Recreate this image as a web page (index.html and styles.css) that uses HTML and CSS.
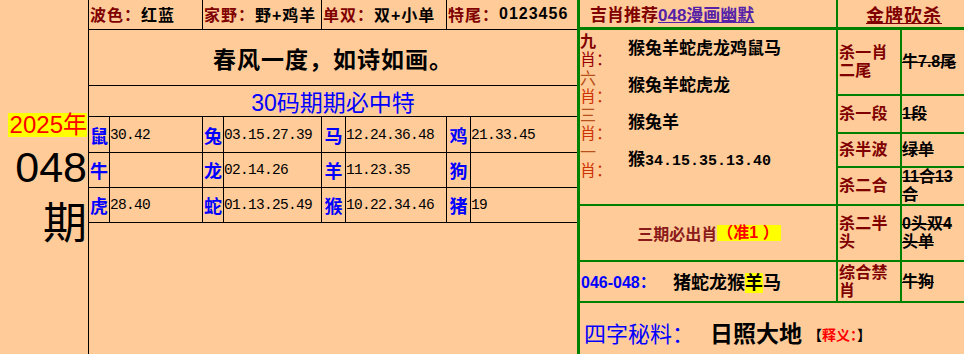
FILE: index.html
```html
<!DOCTYPE html>
<html lang="zh-CN">
<head>
<meta charset="utf-8">
<title>048期</title>
<link rel="stylesheet" href="styles.css">
</head>
<body>
<div class="page">
  <div class="issue">
    <div class="year">2025年</div>
    <div class="num">048</div>
    <div class="qi">期</div>
  </div>

  <div class="mid">
    <div class="hd"><span class="lbl">波色：</span>红蓝</div>
    <div class="hd"><span class="lbl">家野：</span>野+鸡羊</div>
    <div class="hd"><span class="lbl">单双：</span>双+小单</div>
    <div class="hd last"><span class="lbl">特尾：</span>0123456</div>
    <div class="poem">春风一度，如诗如画。</div>
    <div class="title">30码期期必中特</div>

    <div class="zx">鼠</div><div class="nums">30.42</div>
    <div class="zx">兔</div><div class="nums">03.15.27.39</div>
    <div class="zx">马</div><div class="nums">12.24.36.48</div>
    <div class="zx">鸡</div><div class="nums last">21.33.45</div>

    <div class="zx">牛</div><div class="nums"></div>
    <div class="zx">龙</div><div class="nums">02.14.26</div>
    <div class="zx">羊</div><div class="nums">11.23.35</div>
    <div class="zx">狗</div><div class="nums last"></div>

    <div class="zx">虎</div><div class="nums">28.40</div>
    <div class="zx">蛇</div><div class="nums">01.13.25.49</div>
    <div class="zx">猴</div><div class="nums">10.22.34.46</div>
    <div class="zx">猪</div><div class="nums last">19</div>
  </div>

  <div class="right">
    <div class="rhead">
      <div class="rh1">吉肖推荐<span class="link">048漫画幽默</span></div>
      <div class="rh2"><span class="gold">金牌砍杀</span></div>
    </div>
    <div class="rgrid">
      <div class="rec">
        <div class="rrow"><div class="rl"><div class="rl1 dk">九</div><div class="rl2 dk2">肖：</div></div><div class="rt">猴兔羊蛇虎龙鸡鼠马</div></div>
        <div class="rrow"><div class="rl"><div class="rl1 or">六</div><div class="rl2 or2">肖：</div></div><div class="rt">猴兔羊蛇虎龙</div></div>
        <div class="rrow"><div class="rl"><div class="rl1 or">三</div><div class="rl2 or2">肖：</div></div><div class="rt">猴兔羊</div></div>
        <div class="rrow"><div class="rl"><div class="rl1 or">一</div><div class="rl2 or2">肖：</div></div><div class="rt">猴<span class="bn">34.15.35.13.40</span></div></div>
      </div>
      <div class="kl">杀一肖二尾</div><div class="kv">牛7.8尾</div>
      <div class="kl">杀一段</div><div class="kv">1段</div>
      <div class="kl">杀半波</div><div class="kv">绿单</div>
      <div class="kl">杀二合</div><div class="kv">11合13合</div>

      <div class="must">三期必出肖<span class="hl">（准1&nbsp;）</span></div>
      <div class="kl">杀二半头</div><div class="kv">0头双4头单</div>

      <div class="recent"><span class="rng">046-048：</span><span class="zs">猪蛇龙猴<span class="ylw">羊</span>马</span></div>
      <div class="kl">综合禁肖</div><div class="kv">牛狗</div>

      <div class="secret"><span class="sl">四字秘料：</span><span class="sv">日照大地</span><span class="sx">【<span class="red">释义：</span>】</span></div>
    </div>
  </div>
</div>
</body>
</html>
```

FILE: styles.css
```css
html, body {
  margin: 0;
  padding: 0;
}
body {
  width: 964px;
  height: 354px;
  overflow: hidden;
  background: #ffcc99;
  font-family: "Liberation Sans", "Noto Sans CJK SC", sans-serif;
  color: #000;
}
.page {
  display: flex;
  height: 354px;
}

/* left issue column */
.issue {
  width: 89px;
  box-sizing: border-box;
  border-right: 1px solid #000;
  display: flex;
  flex-direction: column;
  justify-content: center;
  align-items: flex-end;
  padding-right: 1px;
}
.year {
  display: inline-block;
  background: #ffff00;
  color: #ff0000;
  font-size: 24px;
  line-height: 24px;
  height: 24px;
  padding-left: 2px;
  margin-top: 2px;
}
.num {
  font-size: 43px;
  line-height: 60px;
  height: 60px;
}
.qi {
  font-size: 44px;
  line-height: 46px;
  height: 46px;
  font-family: "Noto Sans CJK SC", sans-serif;
}

/* middle table */
.mid {
  width: 488px;
  display: grid;
  grid-template-columns: 21px 93px 21px 98px 24px 101px 24px 106px;
  grid-template-rows: 30px 56px 31px 36px 35px 35px;
  align-content: start;
}
.mid > div {
  box-sizing: border-box;
  border-right: 1px solid #000;
  border-bottom: 1px solid #000;
}
.mid > div.last {
  border-right: none;
}
.hd {
  grid-column: span 2;
  font-size: 16px;
  font-weight: bold;
  letter-spacing: 1px;
  display: flex;
  align-items: center;
  padding-left: 1px;
  padding-bottom: 1px;
  white-space: nowrap;
}
.lbl {
  color: #800000;
}
.mid > .poem {
  grid-column: 1 / -1;
  border-right: none;
  display: flex;
  align-items: center;
  justify-content: center;
  font-size: 23px;
  font-weight: bold;
  letter-spacing: 1px;
}
.mid > .title {
  grid-column: 1 / -1;
  border-right: none;
  display: flex;
  align-items: center;
  justify-content: center;
  font-size: 23px;
  color: #0000ff;
}
.zx {
  display: flex;
  align-items: center;
  justify-content: center;
  color: #0000ff;
  font-size: 18px;
  font-weight: bold;
  font-family: "Noto Sans CJK SC", sans-serif;
}
.nums {
  display: flex;
  align-items: center;
  font-family: "Liberation Mono", monospace;
  font-size: 14.5px;
  letter-spacing: -0.7px;
  padding-left: 0;
}

/* right panel */
.right {
  width: 387px;
  box-sizing: border-box;
  border-left: 3px solid #008000;
  display: flex;
  flex-direction: column;
}
.rhead {
  display: flex;
  height: 30px;
  box-sizing: border-box;
  border-bottom: 3px solid #008000;
}
.rh1 {
  width: 258px;
  box-sizing: border-box;
  border-right: 2px solid #008000;
  padding-left: 10px;
  display: flex;
  align-items: center;
  font-size: 17px;
  font-weight: bold;
  color: #800000;
  white-space: nowrap;
}
.link {
  color: #5522a8;
  text-decoration: underline;
}
.rh2 {
  flex: 1;
  display: flex;
  align-items: center;
  justify-content: center;
  padding-left: 6px;
}
.gold {
  color: #800000;
  font-size: 18px;
  font-weight: bold;
  text-decoration: underline;
  letter-spacing: 1px;
}

.rgrid {
  display: grid;
  grid-template-columns: 256px 62px 62px;
  grid-template-rows: 64px 36px 32px 36px 54px 39px 51px;
  gap: 2px;
  background: #008000;
  height: 324px;
}
.rgrid > div {
  background: #ffcc99;
}
.rec {
  grid-column: 1;
  grid-row: 1 / 5;
  padding-top: 1px;
  display: flex;
  flex-direction: column;
}
.rrow {
  display: flex;
  height: 37px;
}
.rl {
  width: 48px;
  flex: none;
  font-size: 16px;
  font-family: "Noto Sans CJK SC", sans-serif;
  white-space: nowrap;
}
.rl1 {
  height: 17px;
  line-height: 17px;
  padding-top: 1px;
}
.rl2 {
  height: 18px;
  line-height: 18px;
}
.dk { color: #800000; font-weight: bold; }
.dk2 { color: #990000; }
.or { color: #b8501c; }
.or2 { color: #cc3300; }
.rt {
  line-height: 32px;
  height: 32px;
  font-size: 17px;
  font-weight: bold;
  font-family: "Noto Sans CJK SC", sans-serif;
  white-space: nowrap;
}
.bn {
  font-family: "Liberation Mono", monospace;
  font-size: 15px;
}

.kl {
  display: flex;
  align-items: center;
  padding-left: 1px;
  font-size: 16px;
  line-height: 18px;
  font-weight: bold;
  color: #800000;
  letter-spacing: 0.3px;
}
.kv {
  display: flex;
  align-items: center;
  font-size: 16px;
  line-height: 18px;
  font-weight: bold;
  text-decoration: line-through;
}

.must {
  display: flex;
  align-items: center;
  justify-content: center;
  font-size: 16px;
  font-weight: bold;
  color: #8b1a1a;
  padding-left: 2px;
}
.hl {
  background: #ffff00;
  color: #ff0000;
  line-height: 16px;
  padding: 0 2px 0 0;
}
.recent {
  display: flex;
  align-items: center;
  padding-left: 1px;
  padding-bottom: 2px;
  white-space: nowrap;
}
.rng {
  color: #0000ff;
  font-size: 16px;
  font-weight: bold;
  width: 92px;
}
.zs {
  font-size: 18px;
  font-weight: bold;
}
.ylw {
  background: #ffff00;
}
.secret {
  grid-column: 1 / -1;
  display: flex;
  align-items: center;
  padding-left: 4px;
  padding-top: 7px;
  white-space: nowrap;
}
.sl {
  color: #0000ff;
  font-size: 22px;
  width: 126px;
}
.sv {
  font-size: 23px;
  font-weight: bold;
}
.sx {
  font-size: 14px;
  font-weight: bold;
  margin-left: 6px;
  padding-top: 4px;
}
.red {
  color: #ff0000;
}
```
